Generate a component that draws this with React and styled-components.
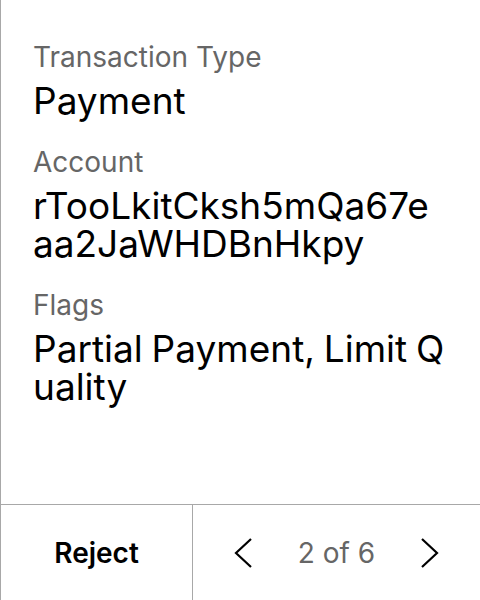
import React from 'react'
import styled, { createGlobalStyle } from 'styled-components'

const GlobalStyle = createGlobalStyle`
  html, body {
    margin: 0;
    padding: 0;
    background: #fff;
  }
  body {
    font-family: Inter, "Noto Sans", sans-serif;
  }
`

const Screen = styled.div`
  width: 480px;
  height: 600px;
  box-sizing: border-box;
  border-left: 1px solid #a8a8a8;
  display: flex;
  flex-direction: column;
  background: #fff;
`

const Details = styled.div`
  flex: 1;
  padding: 40px 33px 0 32px;
  display: flex;
  flex-direction: column;
  gap: 25px;
`

const Field = styled.div`
  display: flex;
  flex-direction: column;
  gap: 8px;
`

const Label = styled.div`
  font-size: 28px;
  line-height: 34px;
  color: #666;
`

const Value = styled.div`
  font-size: 37px;
  line-height: 38px;
  word-spacing: -1.5px;
  color: #000;
  word-break: break-all;
`

const Footer = styled.div`
  height: 95px;
  border-top: 1px solid #a8a8a8;
  display: flex;
`

const RejectButton = styled.button`
  width: 192px;
  border: none;
  border-right: 1px solid #a8a8a8;
  background: none;
  font-family: inherit;
  font-size: 28px;
  font-weight: 600;
  color: #000;
  padding: 0;
`

const Pager = styled.div`
  flex: 1;
  display: flex;
  align-items: center;
  justify-content: space-between;
  padding: 0 41px 0 41px;
`

const ArrowButton = styled.button`
  border: none;
  background: none;
  padding: 0;
  display: flex;
`

const PageCount = styled.span`
  font-size: 28px;
  color: #666;
`

const Chevron = ({ dir }) => (
  <svg width="18" height="30" viewBox="0 0 18 30" fill="none">
    <path
      d={dir === 'left' ? 'M17 1L2 15l15 14' : 'M1 1l15 14L1 29'}
      stroke="#000"
      strokeWidth="2.2"
    />
  </svg>
)

const fields = [
  { label: 'Transaction Type', value: 'Payment' },
  { label: 'Account', value: 'rTooLkitCksh5mQa67eaa2JaWHDBnHkpy' },
  { label: 'Flags', value: 'Partial Payment, Limit Quality' }
]

export default () => {
  return (
    <>
      <GlobalStyle />
      <Screen>
        <Details>
          {fields.map(({ label, value }) => (
            <Field key={label}>
              <Label>{label}</Label>
              <Value>{value}</Value>
            </Field>
          ))}
        </Details>
        <Footer>
          <RejectButton>Reject</RejectButton>
          <Pager>
            <ArrowButton>
              <Chevron dir="left" />
            </ArrowButton>
            <PageCount>2 of 6</PageCount>
            <ArrowButton>
              <Chevron dir="right" />
            </ArrowButton>
          </Pager>
        </Footer>
      </Screen>
    </>
  )
}
